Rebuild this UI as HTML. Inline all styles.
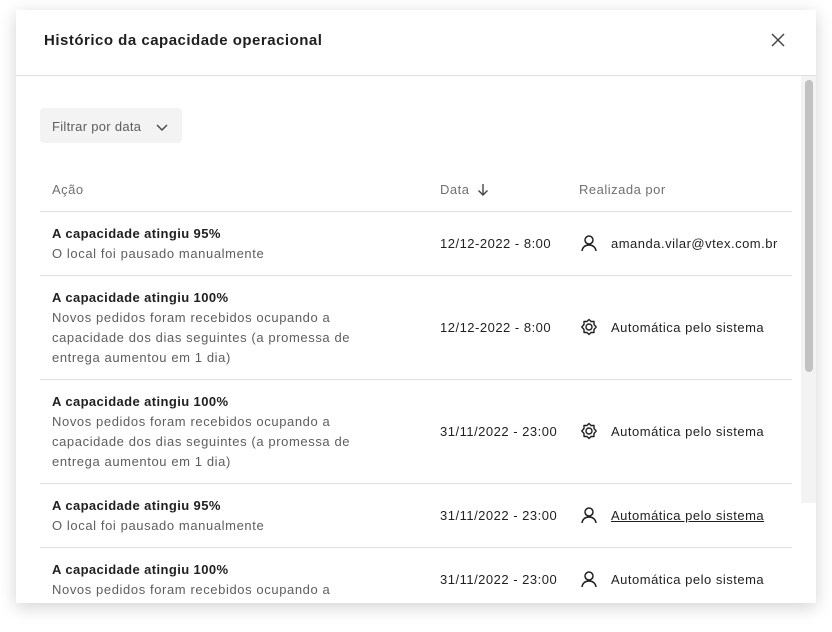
<!DOCTYPE html>
<html><head><meta charset="utf-8"><style>
*{margin:0;padding:0;box-sizing:border-box}
body{width:832px;height:632px;background:#fff;font-family:"Liberation Sans",sans-serif;position:relative;overflow:hidden;color:#1f1f1f}
.modal{position:absolute;left:16px;top:10px;width:800px;height:593px;background:#fff;box-shadow:0 4px 16px rgba(0,0,0,.18);overflow:hidden}
.a{position:absolute;white-space:nowrap}
.t{font-size:15px;font-weight:bold;color:#1f1f1f;letter-spacing:.5px}
.h{font-size:13px;color:#707070;letter-spacing:.5px}
.b{font-size:13px;font-weight:bold;color:#1f1f1f;line-height:20px;letter-spacing:.4px}
.d{font-size:13px;color:#5e5e5e;line-height:20px;letter-spacing:.6px}
.n{font-size:13px;color:#1f1f1f;line-height:20px;letter-spacing:.5px}
.line{position:absolute;left:24px;width:752px;height:1px;background:#e0e0e0}
</style></head><body>
<div class="modal">
 <div class="a t" style="left:28px;top:22px">Histórico da capacidade operacional</div>
 <svg class="a" style="left:754px;top:22px" width="16" height="16" viewBox="0 0 16 16"><path d="M2 2L14 14M14 2L2 14" stroke="#444" stroke-width="1.5" fill="none"/></svg>
 <div class="a" style="left:0;top:65px;width:800px;height:1px;background:#e0e0e0"></div>
 <div class="a" style="left:785px;top:66px;width:15px;height:427px;background:#f3f3f3"></div>
 <div class="a" style="left:789px;top:70px;width:8px;height:292px;background:#c2c2c2;border-radius:4px"></div>
 <div class="a" style="left:24px;top:98px;width:142px;height:35px;background:#f3f3f3;border-radius:4px"></div>
 <div class="a d" style="left:36px;top:107px;letter-spacing:.3px">Filtrar por data</div>
 <svg class="a" style="left:139px;top:112px" width="14" height="10" viewBox="0 0 14 10"><path d="M2 3L7 8L12 3" stroke="#444" stroke-width="1.4" fill="none"/></svg>
 <div class="a h" style="left:36px;top:172px">Ação</div>
 <div class="a h" style="left:424px;top:172px">Data</div>
 <svg class="a" style="left:461px;top:173px" width="12" height="14" viewBox="0 0 12 14"><path d="M6 1V12M1.5 7.5L6 12L10.5 7.5" stroke="#444" stroke-width="1.4" fill="none"/></svg>
 <div class="a h" style="left:563px;top:172px">Realizada por</div>
 <div class="line" style="top:201px"></div>

 <div class="a b" style="left:36px;top:214px">A capacidade atingiu 95%</div>
 <div class="a d" style="left:36px;top:234px">O local foi pausado manualmente</div>
 <div class="a n" style="left:424px;top:224px">12/12-2022 - 8:00</div>
 <svg class="a" style="left:564px;top:224px" width="18" height="18" viewBox="0 0 18 18"><circle cx="9" cy="6" r="4" stroke="#1f1f1f" stroke-width="1.5" fill="none"/><path d="M2 17C2.5 13 5.5 11 9 11S15.5 13 16 17" stroke="#1f1f1f" stroke-width="1.5" fill="none"/></svg>
 <div class="a n" style="left:595px;top:224px">amanda.vilar@vtex.com.br</div>
 <div class="line" style="top:265px"></div>

 <div class="a b" style="left:36px;top:278px">A capacidade atingiu 100%</div>
 <div class="a d" style="left:36px;top:298px">Novos pedidos foram recebidos ocupando a<br>capacidade dos dias seguintes (a promessa de<br>entrega aumentou em 1 dia)</div>
 <div class="a n" style="left:424px;top:308px">12/12-2022 - 8:00</div>
 <svg class="a" style="left:564px;top:308px" width="18" height="18" viewBox="0 0 18 18"><path d="M9 1.5L11 3.5L14 3.5L14 6.5L16.2 9L14 11.5L14 14.5L11 14.5L9 16.5L7 14.5L4 14.5L4 11.5L1.8 9L4 6.5L4 3.5L7 3.5Z" stroke="#1f1f1f" stroke-width="1.4" fill="none" stroke-linejoin="round"/><circle cx="9" cy="9" r="3" stroke="#1f1f1f" stroke-width="1.4" fill="none"/></svg>
 <div class="a n" style="left:595px;top:308px">Automática pelo sistema</div>
 <div class="line" style="top:369px"></div>

 <div class="a b" style="left:36px;top:382px">A capacidade atingiu 100%</div>
 <div class="a d" style="left:36px;top:402px">Novos pedidos foram recebidos ocupando a<br>capacidade dos dias seguintes (a promessa de<br>entrega aumentou em 1 dia)</div>
 <div class="a n" style="left:424px;top:412px">31/11/2022 - 23:00</div>
 <svg class="a" style="left:564px;top:412px" width="18" height="18" viewBox="0 0 18 18"><path d="M9 1.5L11 3.5L14 3.5L14 6.5L16.2 9L14 11.5L14 14.5L11 14.5L9 16.5L7 14.5L4 14.5L4 11.5L1.8 9L4 6.5L4 3.5L7 3.5Z" stroke="#1f1f1f" stroke-width="1.4" fill="none" stroke-linejoin="round"/><circle cx="9" cy="9" r="3" stroke="#1f1f1f" stroke-width="1.4" fill="none"/></svg>
 <div class="a n" style="left:595px;top:412px">Automática pelo sistema</div>
 <div class="line" style="top:473px"></div>

 <div class="a b" style="left:36px;top:486px">A capacidade atingiu 95%</div>
 <div class="a d" style="left:36px;top:506px">O local foi pausado manualmente</div>
 <div class="a n" style="left:424px;top:496px">31/11/2022 - 23:00</div>
 <svg class="a" style="left:564px;top:496px" width="18" height="18" viewBox="0 0 18 18"><circle cx="9" cy="6" r="4" stroke="#1f1f1f" stroke-width="1.5" fill="none"/><path d="M2 17C2.5 13 5.5 11 9 11S15.5 13 16 17" stroke="#1f1f1f" stroke-width="1.5" fill="none"/></svg>
 <div class="a n" style="left:595px;top:496px;text-decoration:underline">Automática pelo sistema</div>
 <div class="line" style="top:537px"></div>

 <div class="a b" style="left:36px;top:550px">A capacidade atingiu 100%</div>
 <div class="a d" style="left:36px;top:570px">Novos pedidos foram recebidos ocupando a</div>
 <div class="a n" style="left:424px;top:560px">31/11/2022 - 23:00</div>
 <svg class="a" style="left:564px;top:560px" width="18" height="18" viewBox="0 0 18 18"><circle cx="9" cy="6" r="4" stroke="#1f1f1f" stroke-width="1.5" fill="none"/><path d="M2 17C2.5 13 5.5 11 9 11S15.5 13 16 17" stroke="#1f1f1f" stroke-width="1.5" fill="none"/></svg>
 <div class="a n" style="left:595px;top:560px">Automática pelo sistema</div>
</div>
</body></html>
